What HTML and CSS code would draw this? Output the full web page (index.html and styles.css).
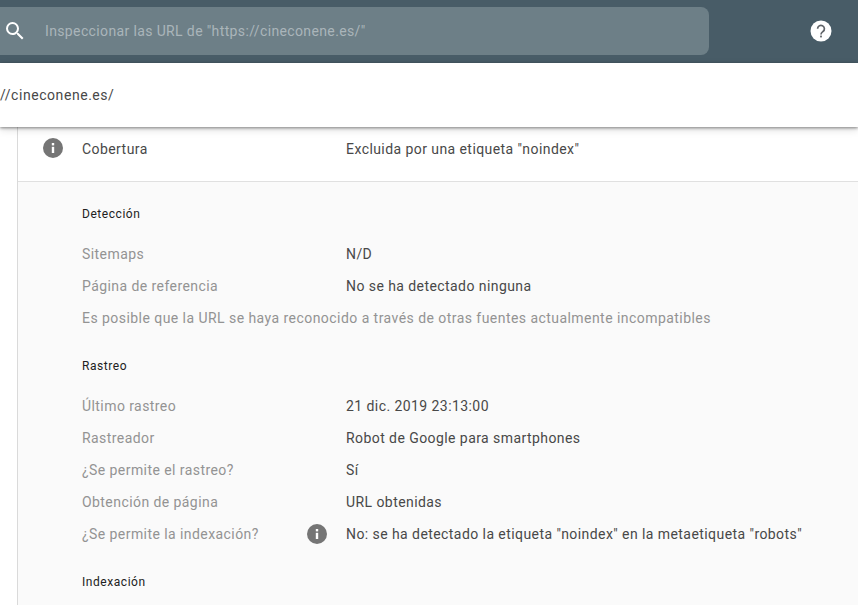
FILE: index.html
```html
<!DOCTYPE html>
<html lang="es">
<head>
<meta charset="utf-8">
<title>Inspeccionar URL</title>
<link rel="stylesheet" href="styles.css">
</head>
<body>
<header class="topbar">
  <div class="search">
    <svg class="search-icon" viewBox="0 0 24 24" width="24" height="24"><path fill="#fff" d="M15.5 14h-.79l-.28-.27A6.47 6.47 0 0 0 16 9.5 6.5 6.5 0 1 0 9.5 16c1.61 0 3.09-.59 4.23-1.57l.27.28v.79l5 4.99L20.49 19l-4.99-5zm-6 0C7.01 14 5 11.99 5 9.5S7.01 5 9.5 5 14 7.01 14 9.5 11.99 14 9.5 14z"/></svg>
    <span class="search-text">Inspeccionar las URL de "https://cineconene.es/"</span>
  </div>
  <svg class="help" viewBox="0 0 22 22" width="22" height="22"><circle cx="11" cy="11" r="10.5" fill="#fff"/><path fill="none" stroke="#5f6368" stroke-width="1.7" d="M7.6 8.8a3.4 3.4 0 1 1 5.4 2.7c-1.2.9-2 1.4-2 3"/><rect x="10.1" y="15.6" width="1.8" height="1.8" fill="#5f6368"/></svg>
</header>
<div class="urlbar">//cineconene.es/</div>
<div class="page">
  <main class="panel">
    <div class="coverage grid-row">
      <svg class="info cov-icon" viewBox="0 0 20 20" width="20" height="20"><circle cx="10" cy="10" r="10" fill="#757575"/><rect x="8.8" y="8.8" width="2.4" height="6.2" fill="#fff"/><rect x="8.8" y="5" width="2.4" height="2.4" fill="#fff"/></svg>
      <span class="value-dark">Cobertura</span>
      <span class="col2 value-dark">Excluida por una etiqueta "noindex"</span>
    </div>
    <div class="details">
      <h2 class="heading">Detección</h2>
      <div class="grid-row row"><span class="label">Sitemaps</span><span class="col2 value-dark">N/D</span></div>
      <div class="grid-row row"><span class="label">Página de referencia</span><span class="col2 value-dark">No se ha detectado ninguna</span></div>
      <div class="row note">Es posible que la URL se haya reconocido a través de otras fuentes actualmente incompatibles</div>
      <h2 class="heading heading-next">Rastreo</h2>
      <div class="grid-row row"><span class="label">Último rastreo</span><span class="col2 value-dark">21 dic. 2019 23:13:00</span></div>
      <div class="grid-row row"><span class="label">Rastreador</span><span class="col2 value-dark">Robot de Google para smartphones</span></div>
      <div class="grid-row row"><span class="label">¿Se permite el rastreo?</span><span class="col2 value-dark">Sí</span></div>
      <div class="grid-row row"><span class="label">Obtención de página</span><span class="col2 value-dark">URL obtenidas</span></div>
      <div class="grid-row row index-row">
        <span class="label">¿Se permite la indexación?</span>
        <svg class="info row-icon" viewBox="0 0 20 20" width="20" height="20"><circle cx="10" cy="10" r="10" fill="#757575"/><rect x="8.8" y="8.8" width="2.4" height="6.2" fill="#fff"/><rect x="8.8" y="5" width="2.4" height="2.4" fill="#fff"/></svg>
        <span class="col2 value-dark">No: se ha detectado la etiqueta "noindex" en la metaetiqueta "robots"</span>
      </div>
      <h2 class="heading heading-next">Indexación</h2>
    </div>
  </main>
</div>
</body>
</html>
```
FILE: styles.css
```css
* { box-sizing: border-box; }
html, body { margin: 0; height: 605px; overflow: hidden; }
body { font-family: Roboto, "Liberation Sans", sans-serif; font-size: 14px; background: #fff; color: #484848; letter-spacing: 0.43px; }
.topbar { height: 63px; background: #485c67; display: flex; align-items: center; position: relative; }
.search { width: 709px; height: 48px; margin-top: -1px; background: #6d7f87; border-radius: 0 8px 8px 0; display: flex; align-items: center; padding-left: 3px; }
.search-text { margin-left: 18px; color: #aab5ba; font-size: 14px; letter-spacing: 0.37px; }
.help { margin-left: 101px; margin-top: -2px; }
.urlbar { height: 64px; background: #fff; display: flex; align-items: center; font-size: 14px; color: #484848; position: relative; z-index: 2; box-shadow: 0 1px 3px rgba(0,0,0,.45), 0 3px 8px rgba(0,0,0,.12); letter-spacing: 0.55px; }
.page { padding-left: 17px; height: 478px; }
.panel { border-left: 1px solid #dadada; height: 100%; }
.grid-row { display: grid; grid-template-columns: 264px 1fr; padding-left: 64px; position: relative; align-items: center; }
.coverage { height: 55px; background: #fff; border-bottom: 1px solid #e0e0e0; padding-bottom: 10px; }
.cov-icon { position: absolute; left: 25px; top: 11px; }
.value-dark { color: #484848; }
.col2 { grid-column: 2; }
.details { background: #fafafa; height: 423px; padding-top: 24px; }
.heading { margin: 0 0 0 64px; font-size: 12px; font-weight: 400; line-height: 16px; height: 16px; color: #212121; letter-spacing: 0.55px; }
.heading-next { margin-top: 24px; }
.row { height: 32px; }
.details > .heading + .row { margin-top: 16px; }
.label { color: #939393; }
.note { margin-left: 64px; color: #939393; line-height: 32px; letter-spacing: 0.45px; }
.row-icon { position: absolute; left: 289px; top: 6px; }
```
